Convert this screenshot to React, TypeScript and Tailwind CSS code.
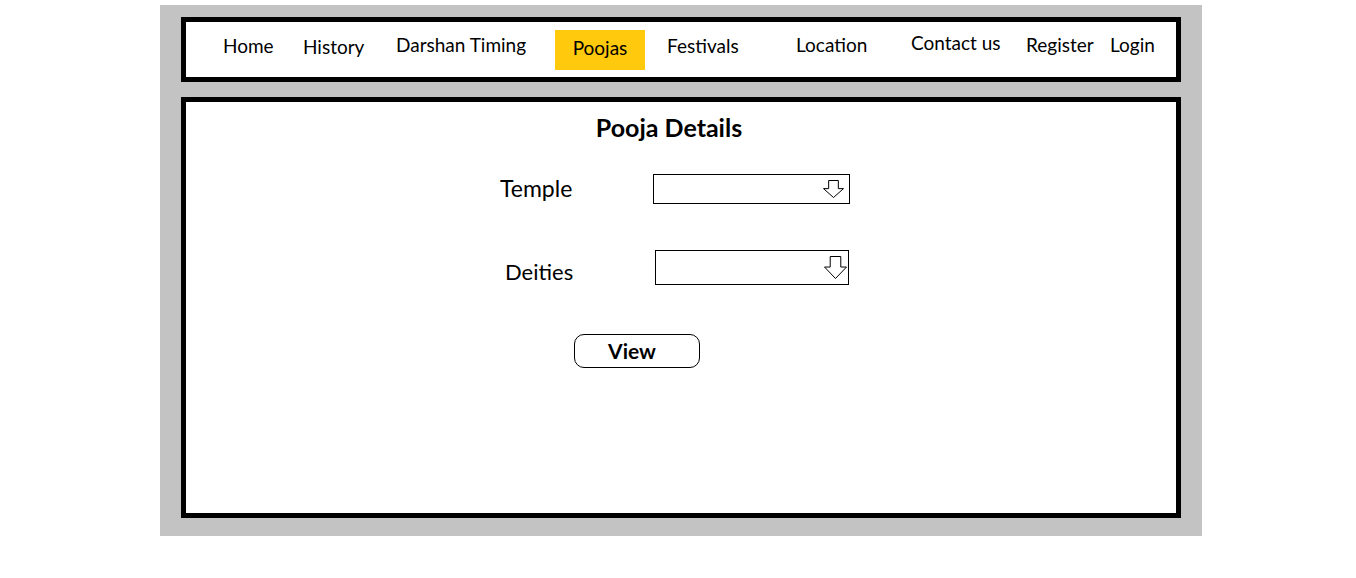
const navFont = { fontFamily: "Lato, 'Open Sans', sans-serif" };

function DownArrow({ w, h }: { w: number; h: number }) {
  // outlined block arrow pointing down
  const sx1 = w * 0.27;
  const sx2 = w * 0.73;
  const sy = h * 0.48;
  return (
    <svg width={w} height={h} viewBox={`0 0 ${w} ${h}`} className="block">
      <polygon
        points={`${sx1},0.5 ${sx2},0.5 ${sx2},${sy} ${w - 0.5},${sy} ${w / 2},${h - 0.5} 0.5,${sy} ${sx1},${sy}`}
        fill="white"
        stroke="black"
        strokeWidth="1"
      />
    </svg>
  );
}

export default function App() {
  return (
    <main className="min-h-screen bg-white pt-[5px] text-black" style={navFont}>
      <div className="ml-[160px] flex h-[531px] w-[1042px] flex-col bg-[#c3c3c3] px-[21px] pt-[12px]">
        <nav className="flex h-[65px] w-[1000px] items-start border-[5px] border-black bg-white pl-[37px] text-[19px] leading-[24px]">
          <span className="mt-[12px] w-[80px]">Home</span>
          <span className="mt-[13px] w-[93px]">History</span>
          <span className="mt-[11px] w-[159px]">Darshan Timing</span>
          <span className="mt-[8px] flex h-[40px] w-[90px] items-center justify-center bg-[#ffc90e] pb-[5px]">
            Poojas
          </span>
          <span className="ml-[22px] mt-[12px] w-[129px]">Festivals</span>
          <span className="mt-[11px] w-[115px]">Location</span>
          <span className="mt-[9px] w-[115px]">Contact us</span>
          <span className="mt-[11px] w-[84px]">Register</span>
          <span className="mt-[11px]">Login</span>
        </nav>

        <section className="mt-[15px] flex h-[421px] w-[1000px] flex-col border-[5px] border-black bg-white">
          <h1 className="mt-[10px] pr-[24px] text-center text-[25px] font-bold leading-[30px]">
            Pooja Details
          </h1>

          <div className="ml-[314px] mt-[32px] flex items-center">
            <span className="-mt-[2px] w-[153px] text-[23px] leading-[28px]">Temple</span>
            <div className="flex h-[30px] w-[197px] items-center justify-end border border-black pr-[5px]">
              <DownArrow w={21} h={18} />
            </div>
          </div>

          <div className="ml-[319px] mt-[46px] flex items-start">
            <span className="mt-[8px] w-[150px] text-[22px] leading-[28px]">Deities</span>
            <div className="flex h-[35px] w-[194px] items-center justify-end border border-black pr-[1px]">
              <DownArrow w={23} h={23} />
            </div>
          </div>

          <button className="ml-[388px] mt-[48px] flex h-[34px] w-[126px] items-center justify-center rounded-[10px] border border-black pr-[10px] text-[21px] font-bold leading-[26px]">
            View
          </button>
        </section>
      </div>
    </main>
  );
}
